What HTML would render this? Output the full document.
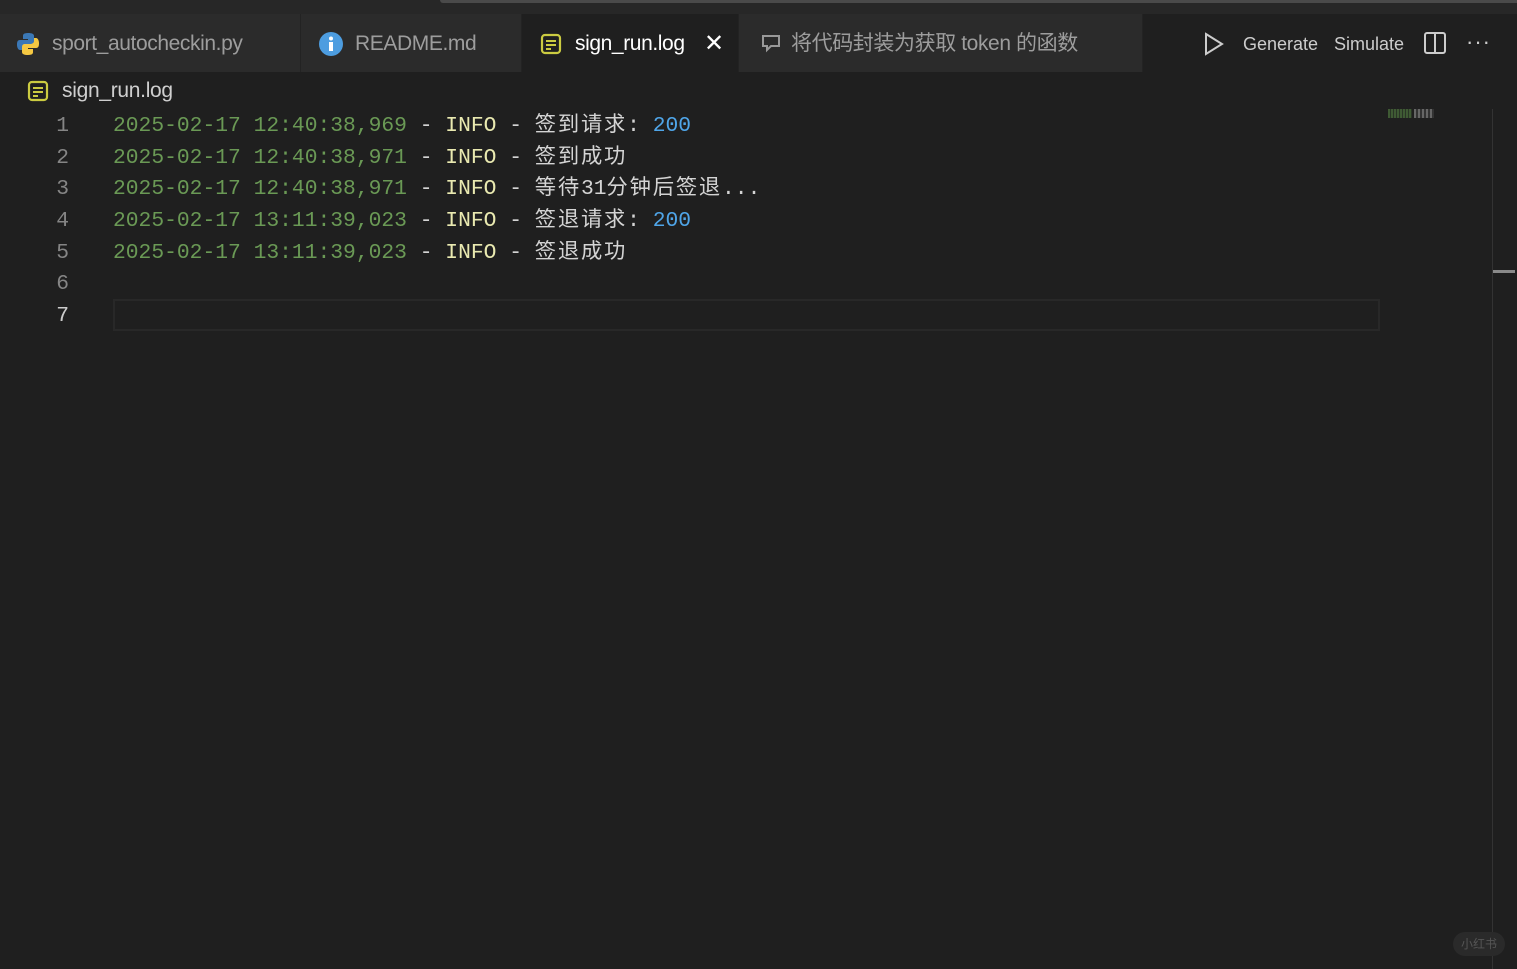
<!DOCTYPE html>
<html><head><meta charset="utf-8"><style>
*{margin:0;padding:0;box-sizing:border-box}
body{width:1517px;height:969px;background:#1f1f1f;overflow:hidden;position:relative;font-family:"Liberation Sans","Noto Sans CJK SC",sans-serif}
.top{position:absolute;left:0;top:0;width:1517px;height:14px;background:#272727}
.topline{position:absolute;left:440px;top:0;width:1077px;height:3px;background:#4a4a4a;border-radius:0 0 0 4px}
.tabs{position:absolute;left:0;top:14px;width:1517px;height:58px;background:#1f1f1f}
.tab{position:absolute;top:0;height:58px;background:#2b2b2b;color:#9d9d9d;font-size:21px;line-height:60px;border-right:1px solid #232323;letter-spacing:-0.4px}
.tab.act{background:#1f1f1f;color:#fff}
.ico{position:absolute}
.code{position:absolute;left:0;top:110px;font-family:"Liberation Mono","Noto Sans CJK SC",monospace;font-size:21.3px}
.ln{position:absolute;height:32px;line-height:32px;white-space:pre}
.num{position:absolute;width:69px;text-align:right;color:#858585}
.g{color:#6a9955}.w{color:#d4d4d4}.b{color:#4fa5e8}.y{color:#e9e9b0}
.c{letter-spacing:1.8px}
</style></head><body>
<div class="top"></div><div class="topline"></div>
<div class="tabs">
 <div class="tab" style="left:0;width:301px">
  <svg class="ico" style="left:16px;top:18px" width="24" height="24" viewBox="0 0 24 24"><path d="M12 1c-5 0-5 2-5 3v3h5v1H4C1 8 1 11 1 13s1 5 3 5h2v-3c0-2 2-3 4-3h5c2 0 3-1 3-3V4c0-2-2-3-6-3z" fill="#3b78b6"/><path d="M12 23c5 0 5-2 5-3v-3h-5v-1h8c3 0 3-3 3-5s-1-5-3-5h-2v3c0 2-2 3-4 3H9c-2 0-3 1-3 3v5c0 2 2 3 6 3z" fill="#f5c842"/></svg>
  <span style="position:absolute;left:52px">sport_autocheckin.py</span></div>
 <div class="tab" style="left:301px;width:221px">
  <svg class="ico" style="left:18px;top:18px" width="24" height="24"><circle cx="12" cy="12" r="12" fill="#4d9de0"/><rect x="10" y="10" width="4" height="9" fill="#fff"/><circle cx="12" cy="6.5" r="2" fill="#fff"/></svg>
  <span style="position:absolute;left:54px">README.md</span></div>
 <div class="tab act" style="left:522px;width:217px">
  <svg class="ico" style="left:18px;top:19px" width="22" height="22"><rect x="2" y="2" width="18" height="18" rx="3" fill="none" stroke="#cbcb41" stroke-width="2.2"/><path d="M6 8h10M6 12h10M6 16h5" stroke="#cbcb41" stroke-width="2"/></svg>
  <span style="position:absolute;left:53px">sign_run.log</span>
  <span style="position:absolute;left:182px;font-size:24px">✕</span></div>
 <div class="tab" style="left:739px;width:404px">
  <svg class="ico" style="left:22px;top:20px" width="22" height="20"><path d="M2 2h16v10h-8l-4 4v-4H2z" fill="none" stroke="#999" stroke-width="2"/></svg>
  <span style="position:absolute;left:52px">将代码封装为获取 token 的函数</span></div>
 <svg class="ico" style="left:1203px;top:18px" width="22" height="24"><path d="M3 2l16 10L3 22z" fill="none" stroke="#ccc" stroke-width="2"/></svg>
 <span style="position:absolute;left:1243px;top:1px;line-height:58px;color:#ccc;font-size:18px">Generate</span>
 <span style="position:absolute;left:1334px;top:1px;line-height:58px;color:#ccc;font-size:18px">Simulate</span>
 <svg class="ico" style="left:1423px;top:17px" width="24" height="24"><rect x="2" y="2" width="20" height="20" rx="2" fill="none" stroke="#ccc" stroke-width="2"/><path d="M12 2v20" stroke="#ccc" stroke-width="2"/></svg>
 <span style="position:absolute;left:1466px;top:-1px;line-height:58px;color:#ccc;font-size:22px;letter-spacing:1px">···</span>
</div>
<svg class="ico" style="left:27px;top:80px" width="22" height="22"><rect x="2" y="2" width="18" height="18" rx="3" fill="none" stroke="#cbcb41" stroke-width="2.2"/><path d="M6 8h10M6 12h10M6 16h5" stroke="#cbcb41" stroke-width="2"/></svg>
<span style="position:absolute;left:62px;top:79px;font-size:21px;color:#cfcfcf;letter-spacing:-0.3px">sign_run.log</span>
<div style="position:absolute;left:113px;top:299px;width:1267px;height:32px;border:2px solid #282828"></div>
<div class="code">
 <div class="ln" style="top:0"><span class="num">1</span><span style="position:absolute;left:113px"><span class="g">2025-02-17 12:40:38,969</span><span class="w"> - </span><span class="y">INFO</span><span class="w"> - <span class="c">签到请求</span>: </span><span class="b">200</span></span></div>
 <div class="ln" style="top:32px"><span class="num">2</span><span style="position:absolute;left:113px"><span class="g">2025-02-17 12:40:38,971</span><span class="w"> - </span><span class="y">INFO</span><span class="w"> - <span class="c">签到成功</span></span></span></div>
 <div class="ln" style="top:63px"><span class="num">3</span><span style="position:absolute;left:113px"><span class="g">2025-02-17 12:40:38,971</span><span class="w"> - </span><span class="y">INFO</span><span class="w"> - <span class="c">等待</span>31<span class="c">分钟后签退</span>...</span></span></div>
 <div class="ln" style="top:95px"><span class="num">4</span><span style="position:absolute;left:113px"><span class="g">2025-02-17 13:11:39,023</span><span class="w"> - </span><span class="y">INFO</span><span class="w"> - <span class="c">签退请求</span>: </span><span class="b">200</span></span></div>
 <div class="ln" style="top:127px"><span class="num">5</span><span style="position:absolute;left:113px"><span class="g">2025-02-17 13:11:39,023</span><span class="w"> - </span><span class="y">INFO</span><span class="w"> - <span class="c">签退成功</span></span></span></div>
 <div class="ln" style="top:158px"><span class="num">6</span></div>
 <div class="ln" style="top:190px"><span class="num" style="color:#ccc">7</span></div>
</div>
<div style="position:absolute;left:1388px;top:109px;width:24px;height:9px;background:repeating-linear-gradient(90deg,#3f5a34 0 2px,#2a3526 2px 3px)"></div>
<div style="position:absolute;left:1414px;top:109px;width:20px;height:9px;background:repeating-linear-gradient(90deg,#666 0 2px,#333 2px 4px)"></div>
<div style="position:absolute;left:1492px;top:109px;width:1px;height:860px;background:#333"></div>
<div style="position:absolute;left:1493px;top:270px;width:22px;height:3px;background:#8a8a8a"></div>
<div style="position:absolute;left:1453px;top:932px;width:52px;height:24px;border-radius:12px;background:#2a2a2a;color:#555;font-size:12px;line-height:24px;text-align:center">小红书</div>
</body></html>
